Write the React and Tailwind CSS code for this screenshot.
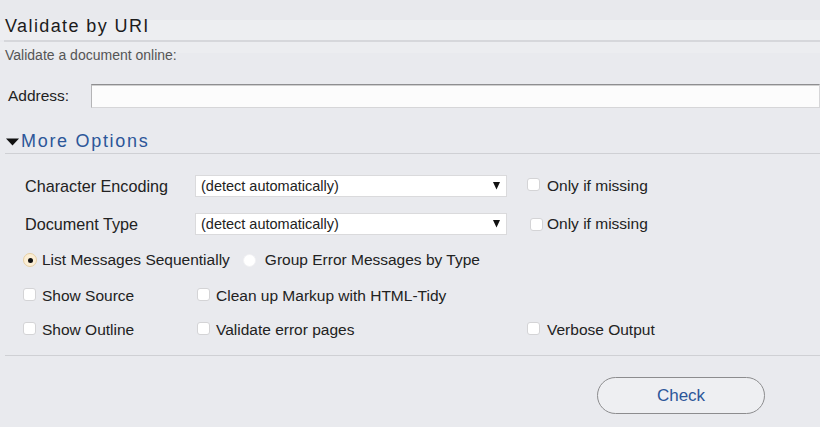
import React from "react";

function Checkbox({ className = "" }) {
  return (
    <span
      className={
        "inline-block w-[13px] h-[13px] shrink-0 rounded-[3px] bg-white border border-[#d4d4d6] " +
        className
      }
    />
  );
}

function Select() {
  return (
    <div className="w-[312px] h-[22px] flex items-center justify-between bg-white border border-[#dadadc] pl-[5px] pr-[6px] text-[14.5px] leading-[18px] text-[#222]">
      <span>(detect automatically)</span>
      <svg width="7" height="8" viewBox="0 0 7 8" className="mb-[1px]">
        <polygon points="0,0 7,0 3.5,7.5" fill="#111" />
      </svg>
    </div>
  );
}

export default function App() {
  return (
    <div className="w-[820px] h-[427px] overflow-hidden bg-[#e9eaee] text-[#222] font-['Liberation_Sans','Helvetica',Arial,sans-serif]">
      {/* Heading */}
      <div className="h-[40px] pl-[5px] pt-[15px] bg-[linear-gradient(#e8e9ed_0,#e8e9ed_20px,#edeef1_20px,#edeef1_100%)]">
        <h1 className="text-[18px] leading-[22px] tracking-[1.4px] font-normal text-[#1c1c1c]">
          Validate by URI
        </h1>
      </div>
      <div className="ml-[4px] h-[2px] bg-[#d6d7db]" />
      <div className="bg-[linear-gradient(#ecedf0_0,#ecedf0_11px,#e9eaee_11px)]">
        <p className="pl-[5px] pt-[5px] text-[14px] leading-[17px] text-[#555]">
          Validate a document online:
        </p>
      </div>

      {/* Address */}
      <div className="mt-[20px] h-[24px] flex items-center">
        <label className="pl-[8px] w-[92px] text-[15.5px] leading-[18px]">Address:</label>
        <div className="w-[740px] h-[24px] bg-[#fcfcfc] border border-[#d6d6d8] border-t-[#8e8e90] border-l-[#b4b4b6] shadow-[inset_0_1px_0_#d0d0d0]" />
      </div>

      {/* More options */}
      <div className="mt-[21px] h-[24px] flex items-center pl-[6px]">
        <svg width="13" height="8" viewBox="0 0 13 8" className="mt-[1px]">
          <polygon points="0,0.5 13,0.5 6.5,7.5" fill="#111" />
        </svg>
        <span className="ml-[2px] text-[18px] leading-[22px] tracking-[1.7px] text-[#2c5699]">
          More Options
        </span>
      </div>
      <div className="ml-[5px] h-[1px] bg-[#cfd0d4]" />

      {/* Character Encoding */}
      <div className="mt-[21px] h-[22px] flex items-center">
        <span className="pl-[25px] w-[195px] text-[16.2px] leading-[18px]">Character Encoding</span>
        <Select />
        <Checkbox className="ml-[20px] -mt-[3px]" />
        <span className="ml-[7px] text-[15.5px] leading-[18px]">Only if missing</span>
      </div>

      {/* Document Type */}
      <div className="mt-[16px] h-[22px] flex items-center">
        <span className="pl-[25px] w-[195px] text-[16.2px] leading-[18px]">Document Type</span>
        <Select />
        <Checkbox className="ml-[23px]" />
        <span className="ml-[4px] text-[15.5px] leading-[18px]">Only if missing</span>
      </div>

      {/* Radios */}
      <div className="mt-[15px] h-[20px] flex items-center pl-[23px] text-[15.5px] leading-[18px]">
        <span className="w-[14px] h-[14px] rounded-full bg-[#fbeed5] border border-[#e6cfa3] flex items-center justify-center">
          <span className="w-[5px] h-[5px] rounded-full bg-[#111]" />
        </span>
        <span className="ml-[5px]">List Messages Sequentially</span>
        <span className="ml-[13px] w-[13px] h-[13px] rounded-full bg-white border border-[#f2f2f4]" />
        <span className="ml-[9px]">Group Error Messages by Type</span>
      </div>

      {/* Show Source row */}
      <div className="mt-[16px] h-[20px] flex items-center pl-[23px] text-[15.5px] leading-[18px]">
        <div className="w-[174px] flex items-center">
          <Checkbox className="-mt-[3px]" />
          <span className="ml-[6px]">Show Source</span>
        </div>
        <div className="flex items-center">
          <Checkbox className="-mt-[3px]" />
          <span className="ml-[6px]">Clean up Markup with HTML-Tidy</span>
        </div>
      </div>

      {/* Show Outline row */}
      <div className="mt-[14px] h-[20px] flex items-center pl-[23px] text-[15.5px] leading-[18px]">
        <div className="w-[174px] flex items-center">
          <Checkbox className="-mt-[3px]" />
          <span className="ml-[6px]">Show Outline</span>
        </div>
        <div className="w-[330px] flex items-center">
          <Checkbox className="-mt-[3px]" />
          <span className="ml-[6px]">Validate error pages</span>
        </div>
        <div className="flex items-center">
          <Checkbox className="-mt-[3px]" />
          <span className="ml-[7px]">Verbose Output</span>
        </div>
      </div>

      <div className="mt-[15px] ml-[5px] h-[1px] bg-[#cfd0d4]" />

      {/* Check button */}
      <div className="mt-[21px] flex justify-end pr-[55px]">
        <button className="w-[168px] h-[37px] rounded-full border-[1.5px] border-[#8c8c8e] bg-[#eeeff2] pt-[1px] text-[17px] leading-[20px] text-[#2c5699] font-['Liberation_Sans',Arial,sans-serif]">
          Check
        </button>
      </div>
    </div>
  );
}
